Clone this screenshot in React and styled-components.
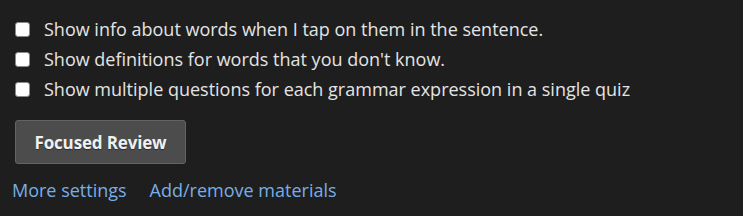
import styled, { createGlobalStyle } from 'styled-components';

const GlobalStyle = createGlobalStyle`
  html, body {
    margin: 0;
    padding: 0;
    background: #1e1e1e;
  }
  body {
    font-family: 'Open Sans', 'Liberation Sans', sans-serif;
    color: #e4e4e4;
  }
`;

const options = [
  'Show info about words when I tap on them in the sentence.',
  "Show definitions for words that you don't know.",
  'Show multiple questions for each grammar expression in a single quiz',
];

const Panel = styled.div`
  width: 743px;
  height: 216px;
  padding: 14px 0 0 12px;
  box-sizing: border-box;
`;

const Options = styled.div`
  display: flex;
  flex-direction: column;
`;

const Option = styled.label`
  display: flex;
  align-items: center;
  height: 30px;
  font-size: 18px;
  color: #e4e4e4;
  gap: 14px;

  input {
    margin: 0 0 0 3px;
    width: 15px;
    height: 15px;
    appearance: none;
    background: #fff;
    border: 1px solid #8a8a8a;
    border-radius: 3px;
    box-sizing: border-box;
  }
`;

const Button = styled.button`
  margin: 16px 0 0 3px;
  width: 171px;
  height: 44px;
  background: #4c4c4c;
  border: 1px solid #636363;
  border-radius: 3px;
  color: #f0f0f0;
  font-family: 'Open Sans', 'Liberation Sans', sans-serif;
  font-weight: 700;
  font-size: 17px;
  text-shadow: 0 1px 1px rgba(0, 0, 0, 0.4);
  letter-spacing: -0.15px;
`;

const Links = styled.div`
  display: flex;
  gap: 23px;
  margin-top: 14px;
`;

const Link = styled.a`
  color: #79ade6;
  font-size: 18px;
  text-decoration: none;
`;

const App = () => (
  <>
    <GlobalStyle />
    <Panel>
      <Options>
        {options.map((text) => (
          <Option key={text}>
            <input type='checkbox' />
            {text}
          </Option>
        ))}
      </Options>
      <Button>Focused Review</Button>
      <Links>
        <Link href='#'>More settings</Link>
        <Link href='#'>Add/remove materials</Link>
      </Links>
    </Panel>
  </>
);

export default App;
